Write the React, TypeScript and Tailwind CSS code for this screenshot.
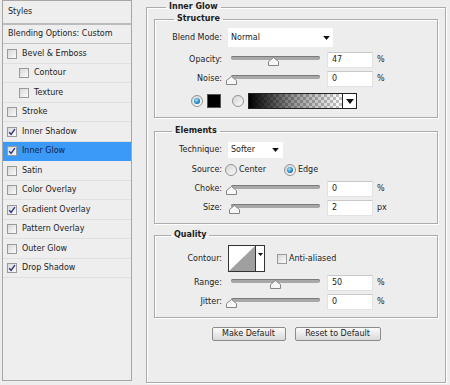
import React from "react";

const styleItems = [
  { label: "Bevel & Emboss", on: false, sub: false },
  { label: "Contour", on: false, sub: true },
  { label: "Texture", on: false, sub: true },
  { label: "Stroke", on: false },
  { label: "Inner Shadow", on: true },
  { label: "Inner Glow", on: true, active: true },
  { label: "Satin", on: false },
  { label: "Color Overlay", on: false },
  { label: "Gradient Overlay", on: true },
  { label: "Pattern Overlay", on: false },
  { label: "Outer Glow", on: false },
  { label: "Drop Shadow", on: true },
];

function Check({ on }: { on?: boolean }) {
  return (
    <span className="flex h-[10px] w-[10px] shrink-0 items-center justify-center border border-[#9a9a9a] bg-linear-to-br from-[#d8d8d8] to-[#fbfbfb]">
      {on && (
        <svg width="8" height="8" viewBox="0 0 8 8">
          <path d="M1.2 4.2 L3.1 6.4 L6.9 1.2" stroke="#26358a" strokeWidth="1.4" fill="none" />
        </svg>
      )}
    </span>
  );
}

function Radio({ on }: { on?: boolean }) {
  return (
    <span className="flex h-[12px] w-[12px] shrink-0 items-center justify-center rounded-full border border-[#939393] bg-linear-to-br from-[#d4d4d4] to-[#fcfcfc]">
      {on && <span className="h-[6px] w-[6px] rounded-full bg-[radial-gradient(circle_at_40%_35%,#a8e4ff,#1b82c4_60%,#0b4c7c)]" />}
    </span>
  );
}

function Arrow({ w = 7 }: { w?: number }) {
  return (
    <svg width={w} height={Math.round(w * 0.6)} viewBox="0 0 10 6">
      <path d="M0 0 H10 L5 6 Z" fill="#111" />
    </svg>
  );
}

function Slider({ at }: { at: number }) {
  return (
    <div className="relative h-[14px] w-[94px] shrink-0">
      <div className="absolute left-[3px] top-[3px] h-[4px] w-[89px] rounded-full bg-[#a8a8a8] shadow-[inset_0_1px_0_#7b7b7b]" />
      <svg className="absolute top-[4px]" style={{ left: at - 5 }} width="11" height="9" viewBox="0 0 11 9">
        <path d="M5.5 0.5 L10.5 4.5 V8.5 H0.5 V4.5 Z" fill="#f7f7f7" stroke="#858585" />
      </svg>
    </div>
  );
}

function Num({ v }: { v: string }) {
  return (
    <div className="ml-[5px] flex h-[16px] w-[46px] shrink-0 items-center border border-[#e2e2e2] border-t-[#c8c8c8] bg-white pl-[4px]">
      {v}
    </div>
  );
}

function Label({ text }: { text: string }) {
  return <span className="w-[68px] shrink-0 pr-[1px] text-right">{text}</span>;
}

function SliderRow({ label, at, v, unit, className }: { label: string; at: number; v: string; unit: string; className: string }) {
  return (
    <div className={"flex h-[18px] items-center " + className}>
      <Label text={label} />
      <span className="ml-[5px]" />
      <Slider at={at} />
      <Num v={v} />
      <span className="ml-[4px]">{unit}</span>
    </div>
  );
}

const box =
  "border border-[#ababab] shadow-[1px_1px_0_#fff,inset_1px_1px_0_#fff]";

export default function App() {
  return (
    <div className="flex h-[385px] w-[450px] bg-[#ededed] font-['DejaVu_Sans',sans-serif] text-[8px] leading-[12px] text-[#1c1c1c]">
      {/* styles list */}
      <div className="ml-[2px] flex h-[381px] w-[130px] flex-col border border-[#a6a6a6] bg-[#eeeeee]">
        <div className="flex h-[24px] items-center border-b-2 border-[#bcbcbc] pl-[5px]">Styles</div>
        <div className="flex h-[19px] items-center border-b border-[#c4c4c4] pl-[5px]">Blending Options: Custom</div>
        {styleItems.map((it, i) => (
          <div
            key={it.label}
            className={
              "flex items-center gap-[5px] border-b " +
              (i % 2 === 0 ? "h-[20px] " : "h-[19px] ") +
              (it.active ? "border-[#3b9af8] bg-[#3b9af8] text-[#0d1f4a] " : "border-[#e0e0e0] ") +
              (it.sub ? "pl-[16px]" : "pl-[4px]")
            }
          >
            <Check on={it.on} />
            <span>{it.label}</span>
          </div>
        ))}
      </div>

      {/* inner glow settings */}
      <fieldset className={"ml-[14px] mt-[1px] h-[382px] w-[300px] px-[7px] " + box}>
        <legend className="ml-[12px] px-[3px] font-bold">Inner Glow</legend>

        <fieldset className={"pb-[8px] " + box}>
          <legend className="ml-[19px] px-[3px] font-bold">Structure</legend>
          <div className="mt-[3px] flex h-[19px] items-center">
            <Label text="Blend Mode:" />
            <div className="ml-[5px] flex h-[19px] w-[105px] items-center justify-between bg-white pl-[3px] pr-[3px]">
              <span>Normal</span>
              <Arrow />
            </div>
          </div>
          <SliderRow label="Opacity:" at={45} v="47" unit="%" className="mt-[4px]" />
          <SliderRow label="Noise:" at={3} v="0" unit="%" className="mt-[1px]" />
          <div className="mt-[5px] flex h-[16px] items-center">
            <span className="ml-[36px]" />
            <Radio on />
            <span className="ml-[4px] h-[14px] w-[14px] border border-[#555] bg-black" />
            <span className="ml-[11px]" />
            <Radio />
            <div className="ml-[4px] flex h-[16px] w-[109px] border border-[#222]">
              <div className="h-full flex-1 bg-[conic-gradient(#c4c4c4_25%,#fff_0_50%,#c4c4c4_0_75%,#fff_0)] bg-[length:6px_6px]">
                <div className="h-full w-full bg-linear-to-r from-black via-[#00000066] to-transparent" />
              </div>
              <div className="flex w-[14px] items-center justify-center border-l border-[#222] bg-white">
                <Arrow w={8} />
              </div>
            </div>
          </div>
        </fieldset>

        <fieldset className={"mt-[7px] pb-[6px] " + box}>
          <legend className="ml-[17px] px-[3px] font-bold">Elements</legend>
          <div className="mt-[4px] flex h-[18px] items-center">
            <Label text="Technique:" />
            <div className="ml-[5px] flex h-[16px] w-[55px] items-center justify-between bg-white pl-[3px] pr-[4px]">
              <span>Softer</span>
              <Arrow />
            </div>
          </div>
          <div className="mt-[2px] flex h-[18px] items-center">
            <Label text="Source:" />
            <span className="ml-[2px]" />
            <Radio />
            <span className="ml-[2px]">Center</span>
            <span className="ml-[18px]" />
            <Radio on />
            <span className="ml-[2px]">Edge</span>
          </div>
          <SliderRow label="Choke:" at={3} v="0" unit="%" className="mt-[1px]" />
          <SliderRow label="Size:" at={6} v="2" unit="px" className="mt-[1px]" />
        </fieldset>

        <fieldset className={"mt-[5px] pb-[6px] " + box}>
          <legend className="ml-[16px] px-[3px] font-bold">Quality</legend>
          <div className="mt-[4px] flex h-[27px] items-center">
            <Label text="Contour:" />
            <div className="ml-[5px] flex h-[27px] w-[37px] border border-[#333] bg-white">
              <svg width="26" height="25" viewBox="0 0 26 25" className="shrink-0">
                <path d="M0 25 L26 0 V25 Z" fill="#a0a0a0" />
              </svg>
              <div className="flex flex-1 justify-center border-l border-[#333] pt-[7px]">
                <Arrow w={5} />
              </div>
            </div>
            <span className="ml-[12px]" />
            <Check />
            <span className="ml-[2px]">Anti-aliased</span>
          </div>
          <SliderRow label="Range:" at={47} v="50" unit="%" className="mt-[2px]" />
          <SliderRow label="Jitter:" at={3} v="0" unit="%" className="mt-[1px]" />
        </fieldset>

        <div className="mt-[9px] flex justify-center gap-[9px]">
          <button className="h-[14px] w-[74px] rounded-[2px] border border-[#8b8b8b] bg-linear-to-b from-[#fbfbfb] to-[#d9d9d9] leading-[12px]">
            Make Default
          </button>
          <button className="h-[14px] w-[86px] rounded-[2px] border border-[#8b8b8b] bg-linear-to-b from-[#fbfbfb] to-[#d9d9d9] leading-[12px]">
            Reset to Default
          </button>
        </div>
      </fieldset>
    </div>
  );
}
